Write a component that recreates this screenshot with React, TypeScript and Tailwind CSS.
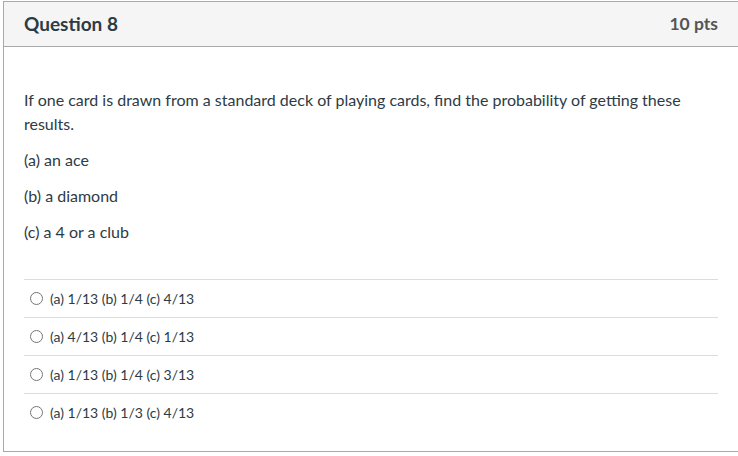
const answers = [
  "(a) 1/13 (b) 1/4 (c) 4/13",
  "(a) 4/13 (b) 1/4 (c) 1/13",
  "(a) 1/13 (b) 1/4 (c) 3/13",
  "(a) 1/13 (b) 1/3 (c) 4/13",
];

export default function App() {
  return (
    <div className="w-[738px] h-[456px] overflow-hidden bg-white font-['Lato','Liberation_Sans',sans-serif] text-[#2d3b45]">
      <div className="ml-[3px] mt-[1px] w-[736px] border border-[#a9a9a9]">
        <div className="flex h-[45px] items-center justify-between border-b border-[#a9a9a9] bg-[#f5f5f5] px-5">
          <h2 className="text-[19px] font-bold text-[#2d3b45]">Question 8</h2>
          <span className="text-[17.5px] font-bold text-[#555]">10 pts</span>
        </div>
        <div className="px-5 pt-[41px] pb-[20px]">
          <div className="text-[16px] leading-6 text-[#2d3b45]">
            <p>
              If one card is drawn from a standard deck of playing cards, find the probability of getting these results.
            </p>
            <p className="mt-3">(a) an ace</p>
            <p className="mt-3">(b) a diamond</p>
            <p className="mt-3">(c) a 4 or a club</p>
          </div>
          <div className="mt-[35px]">
            {answers.map((a) => (
              <label
                key={a}
                className="flex h-[38px] items-center gap-[7px] border-t border-[#dcdcdc] pl-[6px] text-[14px] text-[#2d3b45]"
              >
                <span className="h-[13px] w-[13px] rounded-full border border-[#767676] bg-white" />
                <span>{a}</span>
              </label>
            ))}
          </div>
        </div>
      </div>
    </div>
  );
}
